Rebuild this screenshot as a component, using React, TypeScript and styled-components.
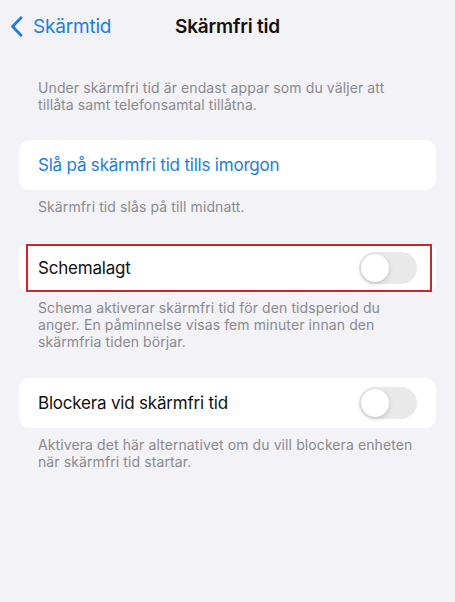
import React from 'react'
import styled, { createGlobalStyle } from 'styled-components'

const GlobalStyle = createGlobalStyle`
	html, body {
		margin: 0;
		padding: 0;
		background: #f2f2f7;
	}
	body {
		font-family: Inter, "Noto Sans", "Liberation Sans", sans-serif;
		-webkit-font-smoothing: antialiased;
	}
`

const Screen = styled.div`
	width: 455px;
	height: 602px;
	background: #f2f2f7;
	overflow: hidden;
`

const NavBar = styled.div`
	position: relative;
	height: 52px;
	display: flex;
	align-items: center;
	justify-content: center;
`

const BackButton = styled.div`
	position: absolute;
	left: 10px;
	top: 0;
	height: 52px;
	display: flex;
	align-items: center;
	gap: 10px;
	color: #1b7ee0;
	font-size: 19px;
	letter-spacing: -0.2px;
`

const Title = styled.div`
	font-size: 19px;
	font-weight: 600;
	color: #111;
	letter-spacing: -0.2px;
	margin-left: 0px;
`

const Content = styled.div`
	padding: 27px 19px 0;
	display: flex;
	flex-direction: column;
`

const Note = styled.div<{ $top?: number }>`
	padding: ${({ $top }) => $top ?? 8}px 19px 0;
	font-size: 14px;
	line-height: 17px;
	color: #8a8a8e;
	letter-spacing: 0.1px;
`

const Card = styled.div<{ $top?: number }>`
	position: relative;
	margin-top: ${({ $top }) => $top ?? 28}px;
	height: 50px;
	background: #fff;
	border-radius: 11px;
	display: flex;
	align-items: center;
	justify-content: space-between;
	padding: 0 19px;
`

const Label = styled.div<{ $link?: boolean }>`
	font-size: 17px;
	color: ${({ $link }) => ($link ? '#1b7ee0' : '#111')};
	letter-spacing: -0.2px;
`

const Track = styled.div<{ $on?: boolean }>`
	width: 58px;
	height: 32px;
	border-radius: 16px;
	background: ${({ $on }) => ($on ? '#34c759' : '#e9e9ea')};
	position: relative;
	flex-shrink: 0;
`

const Knob = styled.div<{ $on?: boolean }>`
	position: absolute;
	top: 2px;
	left: ${({ $on }) => ($on ? 28 : 2)}px;
	width: 28px;
	height: 28px;
	border-radius: 50%;
	background: #fff;
	box-shadow: 0 2px 5px rgba(0, 0, 0, 0.15), 0 0 1px rgba(0, 0, 0, 0.12);
`

const Highlight = styled.div`
	position: absolute;
	left: 7px;
	right: 4px;
	top: 1px;
	bottom: 1px;
	border: 2px solid #d2232c;
	pointer-events: none;
`

const Toggle = ({ on }: { on?: boolean }) => (
	<Track $on={on}>
		<Knob $on={on} />
	</Track>
)

const Chevron = () => (
	<svg width="13" height="21" viewBox="0 0 13 21">
		<path d="M11 1.8 L2.6 10.5 L11 19.2" fill="none" stroke="#1b7ee0" strokeWidth="2.8" strokeLinecap="round" strokeLinejoin="round" />
	</svg>
)

const App = () => (
	<Screen>
		<GlobalStyle />
		<NavBar>
			<BackButton>
				<Chevron />
				Skärmtid
			</BackButton>
			<Title>Skärmfri tid</Title>
		</NavBar>
		<Content>
			<Note $top={0}>
				Under skärmfri tid är endast appar som du väljer att tillåta samt telefonsamtal tillåtna.
			</Note>
			<Card $top={27}>
				<Label $link>Slå på skärmfri tid tills imorgon</Label>
			</Card>
			<Note>Skärmfri tid slås på till midnatt.</Note>
			<Card>
				<Label>Schemalagt</Label>
				<Toggle />
				<Highlight />
			</Card>
			<Note $top={6}>
				Schema aktiverar skärmfri tid för den tidsperiod du anger. En påminnelse visas fem minuter innan den skärmfria tiden börjar.
			</Note>
			<Card>
				<Label>Blockera vid skärmfri tid</Label>
				<Toggle />
			</Card>
			<Note>
				Aktivera det här alternativet om du vill blockera enheten när skärmfri tid startar.
			</Note>
		</Content>
	</Screen>
)

export default App
